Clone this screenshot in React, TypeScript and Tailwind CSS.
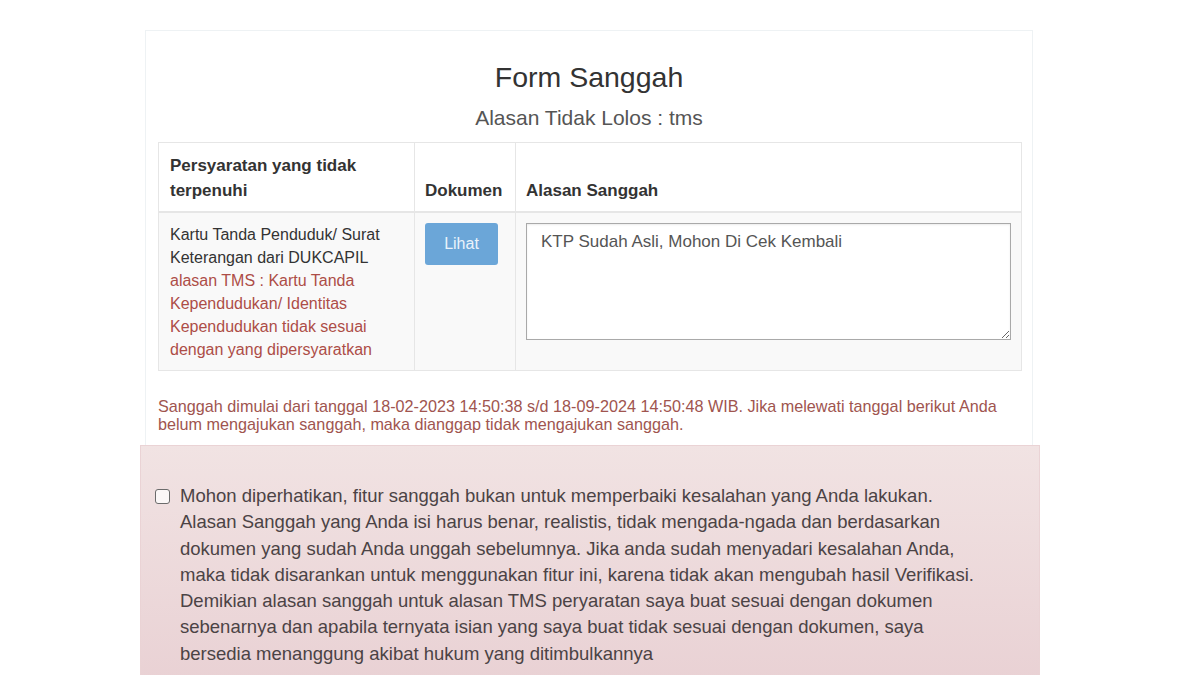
import React from "react";

const font = { fontFamily: '"Liberation Sans", Arial, Helvetica, sans-serif' };

export default function App() {
  return (
    <div className="min-h-[675px] w-full bg-white overflow-hidden" style={font}>
      <div className="ml-[140px] w-[900px] pt-[30px]">
        {/* Card */}
        <div className="ml-[5px] w-[888px] border border-[#eef2f4] border-b-0 px-[12px] pb-[12px]">
          <h3 className="pt-[30px] text-center text-[28.5px] leading-[32px] text-[#333]">Form Sanggah</h3>
          <div className="mt-[13px] text-center text-[21px] leading-[23px] text-[#555]">Alasan Tidak Lolos : tms</div>
          <table className="mt-[13px] w-[863px] border-collapse table-fixed border border-[#e6e6e6]">
            <colgroup>
              <col className="w-[256px]" />
              <col className="w-[101px]" />
              <col className="w-[506px]" />
            </colgroup>
            <thead>
              <tr>
                <th className="border border-[#e6e6e6] border-b-2 px-[11px] pt-[10px] pb-[8px] text-left align-bottom text-[17px] leading-[25px] font-bold text-[#333]">
                  Persyaratan yang tidak
                  <br />
                  terpenuhi
                </th>
                <th className="border border-[#e6e6e6] border-b-2 px-[10px] pt-[10px] pb-[8px] text-left align-bottom text-[17px] leading-[25px] font-bold text-[#333]">
                  Dokumen
                </th>
                <th className="border border-[#e6e6e6] border-b-2 px-[10px] pt-[10px] pb-[8px] text-left align-bottom text-[17px] leading-[25px] font-bold text-[#333]">
                  Alasan Sanggah
                </th>
              </tr>
            </thead>
            <tbody>
              <tr className="bg-[#f9f9f9]">
                <td className="border border-[#e6e6e6] px-[11px] pt-[10px] pb-[9px] align-top text-[16px] leading-[23px] text-[#333]">
                  Kartu Tanda Penduduk/ Surat
                  <br />
                  Keterangan dari DUKCAPIL
                  <br />
                  <span className="text-[#ad4d47]">
                    alasan TMS : Kartu Tanda
                    <br />
                    Kependudukan/ Identitas
                    <br />
                    Kependudukan tidak sesuai
                    <br />
                    dengan yang dipersyaratkan
                  </span>
                </td>
                <td className="border border-[#e6e6e6] px-[10px] pt-[10px] align-top">
                  <button className="flex h-[42px] w-[73px] items-center justify-center rounded-[3px] bg-[#6ba6d8] text-[16px] text-[#eaf3fb]">
                    Lihat
                  </button>
                </td>
                <td className="border border-[#e6e6e6] px-[10px] pt-[10px] align-top">
                  <textarea
                    className="block h-[117px] w-[485px] resize-y border border-[#a9a9a9] bg-white px-[14px] py-[6px] text-[17px] leading-[23px] text-[#555] shadow-[inset_0_1px_2px_rgba(0,0,0,0.08)] outline-none"
                    style={font}
                    defaultValue="KTP Sudah Asli, Mohon Di Cek Kembali"
                  />
                </td>
              </tr>
            </tbody>
          </table>
          <p className="mt-[26px] text-[16.2px] leading-[18px] text-[#a0554f]">
            Sanggah dimulai dari tanggal 18-02-2023 14:50:38 s/d 18-09-2024 14:50:48 WIB. Jika melewati tanggal berikut Anda
            <br />
            belum mengajukan sanggah, maka dianggap tidak mengajukan sanggah.
          </p>
        </div>

        {/* Alert box */}
        <div className="h-[240px] w-[900px] border border-[#ead3d5] bg-gradient-to-b from-[#f1e3e3] to-[#e9d1d4] pl-[14px] pt-[37px]">
          <label className="flex items-start gap-[10px]">
            <span className="mt-[6px] block h-[15px] w-[15px] shrink-0 rounded-[3px] border border-[#6b6b6b] bg-[#fbf7f7]" />
            <span className="text-[18.5px] leading-[26.3px] text-[#4b4345]">
              Mohon diperhatikan, fitur sanggah bukan untuk memperbaiki kesalahan yang Anda lakukan.
              <br />
              Alasan Sanggah yang Anda isi harus benar, realistis, tidak mengada-ngada dan berdasarkan
              <br />
              dokumen yang sudah Anda unggah sebelumnya. Jika anda sudah menyadari kesalahan Anda,
              <br />
              maka tidak disarankan untuk menggunakan fitur ini, karena tidak akan mengubah hasil Verifikasi.
              <br />
              Demikian alasan sanggah untuk alasan TMS peryaratan saya buat sesuai dengan dokumen
              <br />
              sebenarnya dan apabila ternyata isian yang saya buat tidak sesuai dengan dokumen, saya
              <br />
              bersedia menanggung akibat hukum yang ditimbulkannya
            </span>
          </label>
        </div>
      </div>
    </div>
  );
}
